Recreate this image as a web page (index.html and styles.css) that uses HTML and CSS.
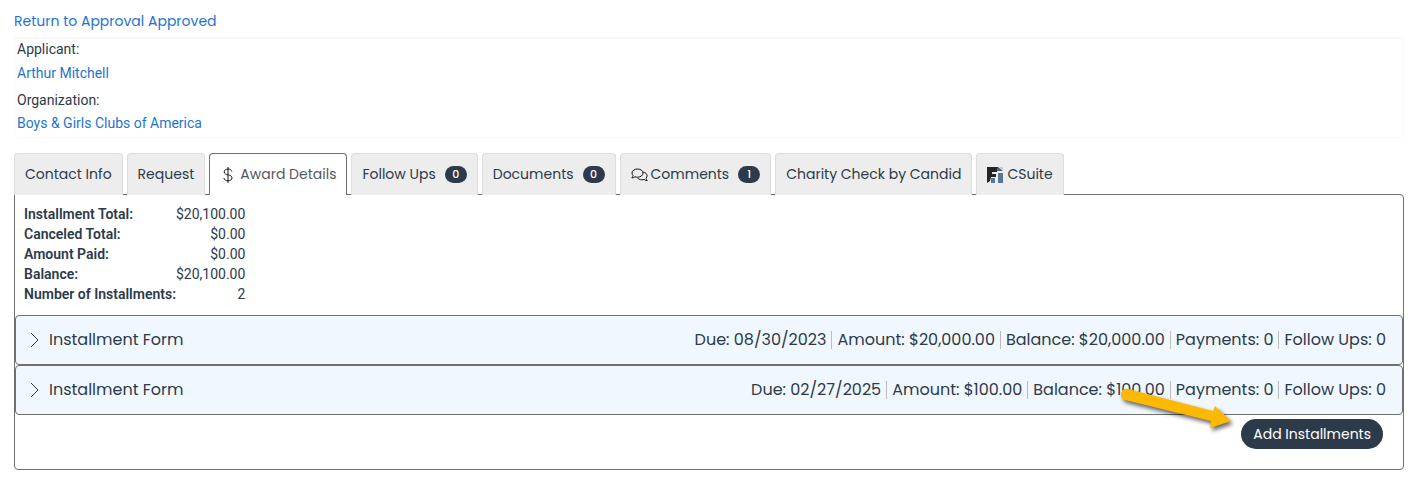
FILE: index.html
```html
<!DOCTYPE html>
<html lang="en">
<head>
    <meta charset="UTF-8">
    <meta name="viewport" content="width=device-width, initial-scale=1.0">
    <title>Award Details</title>
    <link rel="stylesheet" href="styles.css">
</head>
<body>
    <a class="return-link" href="#">Return to Approval Approved</a>

    <div class="applicant-box">
        <div class="field">
            <span>Applicant:</span>
            <a href="#">Arthur Mitchell</a>
        </div>
        <div class="field">
            <span>Organization:</span>
            <a href="#">Boys &amp; Girls Clubs of America</a>
        </div>
    </div>

    <nav class="tabs">
        <button type="button" class="tab">Contact Info</button>
        <button type="button" class="tab">Request</button>
        <button type="button" class="tab active">
            <svg class="dollar-icon" viewBox="0 0 10 16" width="10" height="16">
                <path d="M5 0v16M8.800 4.500C8.500 2.900 7 2.100 5 2.100 2.800 2.100 1.200 3.200 1.200 4.900c0 3.900 7.800 2 7.800 6 0 1.800-1.700 2.900-4 2.900s-3.900-1-4.100-2.800"/>
            </svg>
            Award Details
        </button>
        <button type="button" class="tab">Follow Ups <span class="badge">0</span></button>
        <button type="button" class="tab">Documents <span class="badge">0</span></button>
        <button type="button" class="tab">
            <svg class="comments-icon" viewBox="0 0 17 14" width="17" height="14">
                <path d="M6.500 1C3.500 1 1 2.700 1 5c0 1 .4 1.800 1.100 2.500C2 8.500 1.400 9.300.8 9.900c1.300 0 2.400-.4 3.200-1.100.8.3 1.600.4 2.500.4C9.600 9.200 12 7.400 12 5S9.600 1 6.500 1z"/>
                <path d="M12.200 4.100c2.200.3 3.900 1.800 3.900 3.700 0 .9-.4 1.700-1.100 2.400.1 1 .7 1.800 1.300 2.400-1.300 0-2.400-.4-3.200-1.100-.7.2-1.400.3-2.200.3-1.900 0-3.500-.7-4.400-1.900"/>
            </svg>
            Comments <span class="badge">1</span>
        </button>
        <button type="button" class="tab">Charity Check by Candid</button>
        <button type="button" class="tab">
            <svg class="csuite-icon" viewBox="0 0 16 16" width="16" height="16">
                <path fill="#252525" d="M0 0h11l-1 5H5v2h4v3H4l-1 4-3 2z"/>
                <path fill="#5b7698" d="M4 11h4v5H4zM11 6h5v10h-5z"/>
                <path fill="#4b6078" d="M11 0l5 4h-6z"/>
                <path fill="#c3ccd6" d="M12 0h4v4z"/>
            </svg>
            CSuite
        </button>
    </nav>

    <main class="panel">
        <table class="totals">
            <tr><th scope="row">Installment Total:</th><td>$20,100.00</td></tr>
            <tr><th scope="row">Canceled Total:</th><td>$0.00</td></tr>
            <tr><th scope="row">Amount Paid:</th><td>$0.00</td></tr>
            <tr><th scope="row">Balance:</th><td>$20,100.00</td></tr>
            <tr><th scope="row">Number of Installments:</th><td>2</td></tr>
        </table>

        <button type="button" class="installment">
            <svg class="chevron" viewBox="0 0 10 16" width="10" height="16"><path d="M1 1l7 7-7 7"/></svg>
            <span class="installment-name">Installment Form</span>
            <span class="summary">
                <span>Due: 08/30/2023</span>
                <span>Amount: $20,000.00</span>
                <span>Balance: $20,000.00</span>
                <span>Payments: 0</span>
                <span>Follow Ups: 0</span>
            </span>
        </button>
        <button type="button" class="installment">
            <svg class="chevron" viewBox="0 0 10 16" width="10" height="16"><path d="M1 1l7 7-7 7"/></svg>
            <span class="installment-name">Installment Form</span>
            <span class="summary">
                <span>Due: 02/27/2025</span>
                <span>Amount: $100.00</span>
                <span>Balance: $100.00</span>
                <span>Payments: 0</span>
                <span>Follow Ups: 0</span>
            </span>
        </button>

        <div class="actions">
            <button type="button" class="add-button">Add Installments</button>
            <svg class="arrow" viewBox="0 0 120 50" width="120" height="50">
                <path d="M7 1L92 23 94 18 110 33 89 40 90 33 4 12A5 5 0 0 1 7 1z"/>
            </svg>
        </div>
    </main>
</body>
</html>
```

FILE: styles.css
```css
* {
    box-sizing: border-box;
}

body {
    margin: 0;
    padding: 10px 4px 8px 14px;
    font-family: Roboto, Arial, sans-serif;
    font-size: 14px;
    line-height: 20px;
    color: #2d3a4a;
    background: #fff;
}

a {
    color: #1f74cf;
    text-decoration: none;
}

button {
    font-family: Poppins, Inter, sans-serif;
    color: #2d3a4a;
    cursor: pointer;
}

.return-link {
    display: block;
    font-family: Poppins, Inter, sans-serif;
    line-height: 22px;
}

/* Applicant details */
.applicant-box {
    display: flex;
    flex-direction: column;
    gap: 7px;
    margin-top: 5px;
    padding: 0 2px 4px;
    border: 1px solid #fafafa;
    border-top: 2px solid #f7f7f7;
    border-radius: 4px;
}

.field {
    display: flex;
    flex-direction: column;
    gap: 4px;
}

.field + .field {
    gap: 3px;
}

/* Tabs */
.tabs {
    display: flex;
    gap: 4px;
    margin-top: 15px;
}

.tab {
    display: flex;
    align-items: center;
    height: 42px;
    padding: 0 10px;
    font-size: 14px;
    white-space: nowrap;
    background: #ededed;
    border: 1px solid #ddd;
    border-bottom: 0;
    border-radius: 4px 4px 0 0;
}

.tab.active {
    position: relative;
    color: #55595f;
    background: #fff;
    border-color: #707070;
}

.tab svg {
    flex: none;
}

.dollar-icon {
    margin: 0 7px 0 3px;
    fill: none;
    stroke: #111;
}

.comments-icon {
    margin-right: 3px;
    fill: none;
    stroke: #111;
}

.csuite-icon {
    margin-right: 4px;
}

.badge {
    margin-left: 9px;
    width: 22px;
    border-radius: 10px;
    font-size: 11px;
    font-weight: 500;
    line-height: 17px;
    text-align: center;
    color: #fff;
    background: #2d3a4a;
}

/* Tab content */
.panel {
    margin-top: -1px;
    padding: 9px 0 20px;
    border: 1px solid #707070;
    border-radius: 0 4px 4px 4px;
}

.totals {
    margin: 0 0 11px 9px;
    border-collapse: collapse;
}

.totals th,
.totals td {
    padding: 0;
}

.totals th {
    font-weight: 600;
    text-align: left;
}

.totals td {
    text-align: right;
}

.installment {
    display: flex;
    align-items: center;
    width: 100%;
    height: 50px;
    padding: 0 16px 0 14px;
    font-size: 16px;
    line-height: 24px;
    background: #f0f7ff;
    border: 1px solid #707070;
    border-radius: 4px;
}

.chevron {
    margin-right: 9px;
    fill: none;
    stroke: #2d3a4a;
}

.summary {
    display: flex;
    align-items: center;
    margin-left: auto;
    line-height: 18px;
}

.summary span + span {
    margin-left: 5px;
    padding-left: 5px;
    border-left: 1px solid #bbb;
}

.actions {
    position: relative;
    display: flex;
    justify-content: flex-end;
    padding: 4px 20px 0;
}

.add-button {
    height: 30px;
    padding: 0 12px;
    font-size: 14px;
    color: #fff;
    background: #2d3a4a;
    border: 0;
    border-radius: 15px;
}

/* Pointer to the add button */
.arrow {
    position: absolute;
    top: -27px;
    right: 162px;
    fill: #fdb902;
    filter: drop-shadow(2px 3px 2px rgba(0, 0, 0, 0.6));
    pointer-events: none;
}
```
